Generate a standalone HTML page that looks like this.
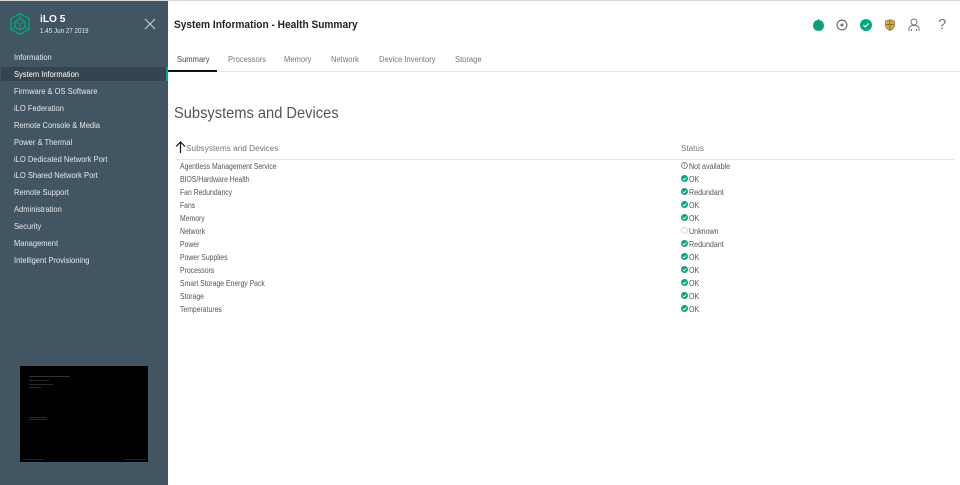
<!DOCTYPE html>
<html><head><meta charset="utf-8"><style>
html,body{margin:0;padding:0;width:960px;height:485px;overflow:hidden;background:#fff;font-family:"Liberation Sans",sans-serif}
#r{position:absolute;left:0;top:0;width:960px;height:485px;overflow:hidden;filter:blur(.3px)}
#r div,#r svg{position:absolute}
.t{white-space:nowrap;line-height:12px;transform-origin:0 50%}
.n{left:13.5px;color:#e4e9ec;font-size:8.6px;transform:scaleX(.878)}
.tab{top:53px;color:#777;font-size:8.6px;transform:scaleX(.884)}
.c{left:180px;color:#555;font-size:7.9px;transform:scaleX(.867)}
.s{left:688.5px;color:#555;font-size:7.9px;transform:scaleX(.9)}
</style></head><body><div id="r">
<div style="left:0;top:0;width:960px;height:1px;background:#d8d8d8"></div>
<div style="left:0;top:1px;width:168px;height:484px;background:#425563"></div>
<div style="left:1px;top:67px;width:165px;height:14px;background:#364450"></div>
<div style="left:166px;top:67px;width:2px;height:14px;background:#01a982"></div>
<svg style="left:9px;top:12px" width="22" height="25" viewBox="0 0 22 25" fill="none" stroke="#01a982" stroke-width="1.3"><path d="M11 1.5L20 6.7V17.3L11 22.5L2 17.3V6.7Z"/><path d="M11 6.5L16 9.5V15L11 18L6 15V9.5Z"/><path d="M6 9.5L11 12.5L16 9.5M11 12.5V18M11 1.5V6.5M2 17.3L6 15M20 17.3L16 15" stroke-width=".9"/></svg>
<div class="t" style="left:40px;top:13px;color:#fff;font-size:10.5px;font-weight:bold;transform:scaleX(.97)">iLO 5</div>
<div class="t" style="left:40px;top:25px;color:#e4e9ec;font-size:7.3px;transform:scaleX(.86)">1.45 Jun 27 2019</div>
<svg style="left:144px;top:18px" width="12" height="12" viewBox="0 0 12 12" stroke="#cfd6db" stroke-width="1" fill="none"><path d="M1 1L11 11M11 1L1 11"/></svg>
<div class="t n" style="top:51px">Information</div>
<div class="t n" style="top:68px;color:#fff">System Information</div>
<div class="t n" style="top:85px">Firmware &amp; OS Software</div>
<div class="t n" style="top:102px">iLO Federation</div>
<div class="t n" style="top:119px">Remote Console &amp; Media</div>
<div class="t n" style="top:136px">Power &amp; Thermal</div>
<div class="t n" style="top:153px">iLO Dedicated Network Port</div>
<div class="t n" style="top:169px">iLO Shared Network Port</div>
<div class="t n" style="top:186px">Remote Support</div>
<div class="t n" style="top:203px">Administration</div>
<div class="t n" style="top:220px">Security</div>
<div class="t n" style="top:237px">Management</div>
<div class="t n" style="top:254px">Intelligent Provisioning</div>
<div style="left:20px;top:366px;width:128px;height:96px;background:#000"></div>
<div style="left:29px;top:376px;width:41px;height:1px;background:#333"></div>
<div style="left:29px;top:380px;width:20px;height:1px;background:#2a2a2a"></div>
<div style="left:29px;top:384px;width:24px;height:1px;background:#2a2a2a"></div>
<div style="left:29px;top:387px;width:12px;height:1px;background:#2a2a2a"></div>
<div style="left:29px;top:417px;width:18px;height:1px;background:#2a2a2a"></div>
<div style="left:29px;top:419px;width:19px;height:1px;background:#2a2a2a"></div>
<div style="left:23px;top:459px;width:21px;height:1px;background:#222"></div>
<div style="left:124px;top:459px;width:22px;height:1px;background:#222"></div>

<div class="t" style="left:174px;top:19px;color:#222;font-size:10.9px;font-weight:bold;transform:scaleX(.931)">System Information - Health Summary</div>
<div style="left:813px;top:20px;width:10.5px;height:10.5px;border-radius:50%;background:#0f9d7e"></div>
<div style="left:817.5px;top:18.5px;width:1.5px;height:3px;background:#0f9d7e"></div>
<svg style="left:836px;top:19px" width="12" height="12" viewBox="0 0 12 12"><circle cx="6" cy="6" r="4.9" fill="none" stroke="#666" stroke-width="1.1"/><circle cx="6" cy="6" r="1.5" fill="#666"/></svg>
<svg style="left:860px;top:19px" width="12" height="12" viewBox="0 0 12 12"><circle cx="6" cy="6" r="6" fill="#01a982"/><path d="M3.4 6.2L5.2 7.9L8.6 4.5" fill="none" stroke="#fff" stroke-width="1.2"/></svg>
<svg style="left:885px;top:19px" width="10" height="12" viewBox="0 0 10 12"><path d="M5 .6L9.5 2V6.5C9.5 9 7 10.7 5 11.5C3 10.7.5 9 .5 6.5V2Z" fill="#d9a93a" stroke="#8a7a45" stroke-width=".7"/><path d="M5 .6V11.5M.5 5.5H9.5" stroke="#6b6040" stroke-width=".8"/></svg>
<svg style="left:908px;top:18px" width="12" height="14" viewBox="0 0 12 14" fill="none" stroke="#777" stroke-width="1"><circle cx="6" cy="4" r="3"/><path d="M1 13V10.5C1 8.5 3 7.5 6 7.5S11 8.5 11 10.5V13M3.5 11V13M8.5 11V13"/></svg>
<div class="t" style="left:938px;top:17px;color:#777;font-size:15px;line-height:15px">?</div>

<div class="t tab" style="left:177px;color:#444">Summary</div>
<div class="t tab" style="left:228px">Processors</div>
<div class="t tab" style="left:284px">Memory</div>
<div class="t tab" style="left:331px">Network</div>
<div class="t tab" style="left:379px">Device Inventory</div>
<div class="t tab" style="left:455px">Storage</div>
<div style="left:168px;top:71px;width:792px;height:1px;background:#e8e8e8"></div>
<div style="left:168px;top:69.5px;width:49px;height:2px;background:#111"></div>

<div class="t" style="left:174px;top:105px;color:#555;font-size:15.6px;line-height:18px;transform:scaleX(.94)">Subsystems and Devices</div>
<svg style="left:175px;top:141px" width="11" height="12" viewBox="0 0 11 12" fill="none" stroke="#111" stroke-width="1.2"><path d="M5.5 12V1M1 5.5L5.5 1L10 5.5"/></svg>
<div class="t" style="left:186px;top:142px;color:#777;font-size:8.7px;transform:scaleX(.948)">Subsystems and Devices</div>
<div class="t" style="left:681px;top:142px;color:#777;font-size:8.7px;transform:scaleX(.93)">Status</div>
<div style="left:175px;top:159px;width:779px;height:1px;background:#e4e4e4"></div>

<div class="t c" style="top:160.5px">Agentless Management Service</div>
<div class="t c" style="top:173.5px">BIOS/Hardware Health</div>
<div class="t c" style="top:186.5px">Fan Redundancy</div>
<div class="t c" style="top:199.5px">Fans</div>
<div class="t c" style="top:212.5px">Memory</div>
<div class="t c" style="top:225.5px">Network</div>
<div class="t c" style="top:238.5px">Power</div>
<div class="t c" style="top:251.5px">Power Supplies</div>
<div class="t c" style="top:264.5px">Processors</div>
<div class="t c" style="top:277.5px">Smart Storage Energy Pack</div>
<div class="t c" style="top:290.5px">Storage</div>
<div class="t c" style="top:303.5px">Temperatures</div>

<svg width="0" height="0"><defs><g id="ok"><circle cx="3.5" cy="3.5" r="3.5" fill="#0fa27f"/><path d="M1.8 3.6L3.1 4.9L5.3 2.6" fill="none" stroke="#fff" stroke-width=".9"/></g></defs></svg>
<svg style="left:680.5px;top:162px" width="7" height="7" viewBox="0 0 7 7"><circle cx="3.5" cy="3.5" r="3" fill="none" stroke="#666" stroke-width=".7"/><path d="M3.5 1.6V3.8M3.5 4.5V5.3" stroke="#666" stroke-width=".7"/></svg>
<svg style="left:680.5px;top:174.5px" width="7" height="7"><use href="#ok"/></svg>
<svg style="left:680.5px;top:187.5px" width="7" height="7"><use href="#ok"/></svg>
<svg style="left:680.5px;top:200.5px" width="7" height="7"><use href="#ok"/></svg>
<svg style="left:680.5px;top:213.5px" width="7" height="7"><use href="#ok"/></svg>
<svg style="left:680.5px;top:227px" width="7" height="7" viewBox="0 0 7 7"><circle cx="3.5" cy="3.5" r="3" fill="none" stroke="#ccc" stroke-width=".7"/></svg>
<svg style="left:680.5px;top:239.5px" width="7" height="7"><use href="#ok"/></svg>
<svg style="left:680.5px;top:252.5px" width="7" height="7"><use href="#ok"/></svg>
<svg style="left:680.5px;top:265.5px" width="7" height="7"><use href="#ok"/></svg>
<svg style="left:680.5px;top:278.5px" width="7" height="7"><use href="#ok"/></svg>
<svg style="left:680.5px;top:291.5px" width="7" height="7"><use href="#ok"/></svg>
<svg style="left:680.5px;top:304.5px" width="7" height="7"><use href="#ok"/></svg>

<div class="t s" style="top:160.5px">Not available</div>
<div class="t s" style="top:173.5px">OK</div>
<div class="t s" style="top:186.5px">Redundant</div>
<div class="t s" style="top:199.5px">OK</div>
<div class="t s" style="top:212.5px">OK</div>
<div class="t s" style="top:225.5px">Unknown</div>
<div class="t s" style="top:238.5px">Redundant</div>
<div class="t s" style="top:251.5px">OK</div>
<div class="t s" style="top:264.5px">OK</div>
<div class="t s" style="top:277.5px">OK</div>
<div class="t s" style="top:290.5px">OK</div>
<div class="t s" style="top:303.5px">OK</div>
</div></body></html>
